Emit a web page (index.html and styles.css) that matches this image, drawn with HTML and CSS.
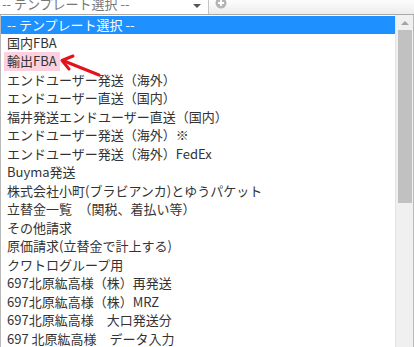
FILE: index.html
```html
<!DOCTYPE html>
<html lang="ja">
<head>
    <meta charset="UTF-8">
    <meta name="viewport" content="width=device-width, initial-scale=1.0">
    <title>テンプレート選択</title>
    <link rel="stylesheet" href="styles.css">
</head>
<body>
    <div class="topbar">
        <div class="select">
            <span class="select-text">-- テンプレート選択 --</span>
            <span class="caret"></span>
        </div>
        <svg class="add-icon" width="12" height="12" viewBox="0 0 12 12">
            <circle cx="6" cy="6" r="5.5" fill="#b4b4b4"/>
            <path d="M6 3v6M3 6h6" stroke="#fff" stroke-width="1.8"/>
        </svg>
    </div>

    <div class="dropdown">
        <ul class="options">
            <li class="option selected">-- テンプレート選択 --</li>
            <li class="option">国内FBA</li>
            <li class="option"><span class="marked">輸出FBA</span></li>
            <li class="option">エンドユーザー発送（海外）</li>
            <li class="option">エンドユーザー直送（国内）</li>
            <li class="option">福井発送エンドユーザー直送（国内）</li>
            <li class="option">エンドユーザー発送（海外）※</li>
            <li class="option">エンドユーザー発送（海外）FedEx</li>
            <li class="option">Buyma発送</li>
            <li class="option">株式会社小町(ブラビアンカ)とゆうパケット</li>
            <li class="option">立替金一覧　（関税、着払い等）</li>
            <li class="option">その他請求</li>
            <li class="option">原価請求(立替金で計上する)</li>
            <li class="option">クワトログループ用</li>
            <li class="option">697北原紘高様（株）再発送</li>
            <li class="option">697北原紘高様（株）MRZ</li>
            <li class="option">697北原紘高様　大口発送分</li>
            <li class="option">697 北原紘高様　データ入力</li>
        </ul>
        <div class="scrollbar">
            <div class="scroll-up"></div>
            <div class="scroll-thumb"></div>
        </div>

        <!-- annotation arrow pointing at 輸出FBA -->
        <svg class="arrow" width="60" height="30" viewBox="0 0 60 30">
            <path d="M40 23 L5 9" stroke="#e5121c" stroke-width="3" stroke-linecap="round"/>
            <path d="M14 4 L3 8.5 L10 17" fill="none" stroke="#e5121c" stroke-width="3" stroke-linecap="round" stroke-linejoin="round"/>
        </svg>
    </div>
</body>
</html>
```

FILE: styles.css
```css
body {
    margin: 0;
    padding: 0;
    width: 414px;
    height: 347px;
    overflow: hidden;
    background: #fff;
    font-family: "Noto Sans CJK JP", "Noto Sans", sans-serif;
    font-size: 13px;
    color: #333;
}
.topbar {
    height: 14px;
    display: flex;
    align-items: flex-start;
    background: linear-gradient(#fdfdfd, #ececec);
    border-bottom: 1px solid #a9a9a9;
    overflow: hidden;
}
.select {
    width: 208px;
    height: 14px;
    border-right: 1px solid #c4c4c4;
    display: flex;
    justify-content: space-between;
    overflow: hidden;
    background: #fff;
}
.select-text {
    display: block;
    margin-top: -5px;
    padding-left: 2px;
    line-height: 18px;
    color: #777;
}
.caret {
    width: 0;
    height: 0;
    margin: 4px 7px 0 0;
    border-left: 4px solid transparent;
    border-right: 4px solid transparent;
    border-top: 4px solid #555;
}
.add-icon {
    margin: -3px 0 0 6px;
}
.dropdown {
    position: relative;
    display: flex;
    height: 332px;
    border-left: 1px solid #b9b9b9;
    border-right: 1px solid #b9b9b9;
}
.options {
    list-style: none;
    margin: 0;
    padding: 0;
    flex: 1;
    overflow: hidden;
}
.option {
    height: 18.5px;
    line-height: 18.5px;
    padding-left: 6px;
    white-space: nowrap;
}
.option.selected {
    height: 17.5px;
    line-height: 17.5px;
    margin-top: 1px;
    background: #1e90ff;
    color: #fff;
}
.marked {
    display: inline-block;
    margin-left: -3px;
    padding: 0 3px;
    background: #fcd0de;
}
.scrollbar {
    width: 17px;
    background: #f0f0f0;
    border-left: 1px solid #e4e4e4;
    display: flex;
    flex-direction: column;
    align-items: center;
}
.scroll-up {
    width: 0;
    height: 0;
    margin: 6px 0 5px;
    border-left: 4px solid transparent;
    border-right: 4px solid transparent;
    border-bottom: 4px solid #a3a3a3;
}
.scroll-thumb {
    width: 14px;
    height: 173px;
    background: #c1c1c1;
}
.arrow {
    position: absolute;
    left: 58px;
    top: 37px;
}
```
